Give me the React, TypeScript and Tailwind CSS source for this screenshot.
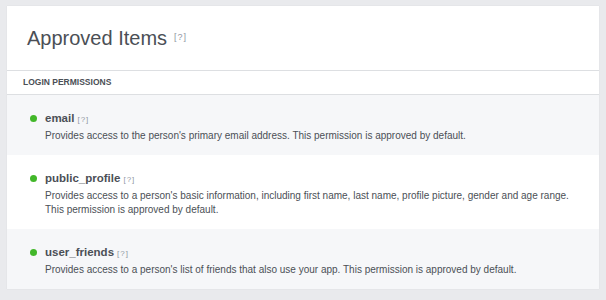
const permissions = [
  {
    name: "email",
    desc: "Provides access to the person's primary email address. This permission is approved by default.",
  },
  {
    name: "public_profile",
    desc: "Provides access to a person's basic information, including first name, last name, profile picture, gender and age range. This permission is approved by default.",
  },
  {
    name: "user_friends",
    desc: "Provides access to a person's list of friends that also use your app. This permission is approved by default.",
  },
];

function Help({ big }: { big?: boolean }) {
  return (
    <span className={`${big ? "text-[9px]" : "text-[8px]"} text-[#9197a3] tracking-[1px]`}>[?]</span>
  );
}

export default function App() {
  return (
    <div className="w-[606px] h-[300px] bg-[#e9eaed] pt-[6px] pl-[7px] pr-[7px] font-['Liberation_Sans',Arial,sans-serif] text-[#4b4f56]">
      <div className="bg-white shadow-[0_0_1px_rgba(0,0,0,0.1)]">
        {/* header */}
        <div className="h-[65px] flex items-center gap-[7px] pl-[20px] border-b border-[#dddfe2]">
          <h1 className="text-[20px] leading-none">Approved Items</h1>
          <Help big />
        </div>
        <div className="h-[24px] flex items-center pl-[16px] border-b border-[#dddfe2] text-[8.5px] font-bold">
          LOGIN PERMISSIONS
        </div>

        {/* permission rows */}
        {permissions.map((p, i) => (
          <div
            key={p.name}
            className={`flex pl-[23px] pr-[20px] pt-[16px] pb-[12px] ${i % 2 === 0 ? "bg-[#f6f7f9]" : "bg-white"}`}
          >
            <div className="w-[7px] h-[7px] rounded-full bg-[#42b72a] mt-[4px] mr-[8px] shrink-0" />
            <div>
              <div className="flex items-baseline gap-[3px] h-[14px]">
                <span className="text-[11.5px] leading-[14px] font-bold">{p.name}</span>
                <Help />
              </div>
              <p className="text-[10px] leading-[14px] mt-[4px]">{p.desc}</p>
            </div>
          </div>
        ))}
      </div>
    </div>
  );
}
